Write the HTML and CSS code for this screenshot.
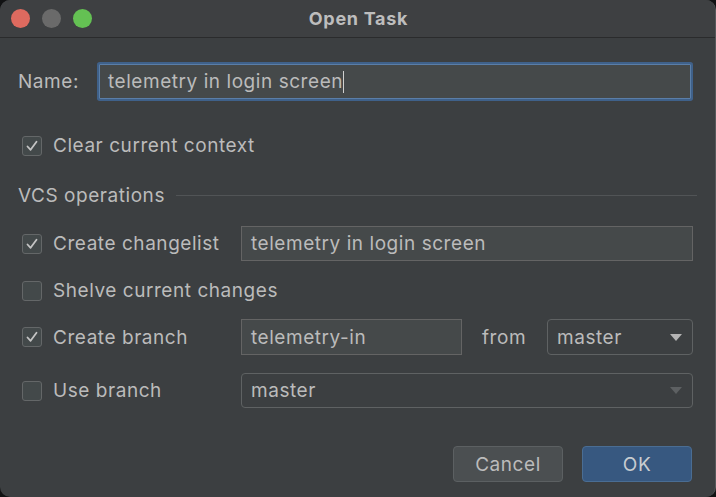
FILE: index.html
```html
<!DOCTYPE html>
<html>
<head>
<meta charset="utf-8">
<link rel="stylesheet" href="styles.css">
</head>
<body>
<div class="window">
  <div class="titlebar">
    <div class="lights">
      <span class="light red"></span>
      <span class="light gray"></span>
      <span class="light green"></span>
    </div>
    <div class="title">Open Task</div>
    <div></div>
  </div>
  <div class="content">
    <div class="row name-row">
      <label class="name-label">Name:</label>
      <div class="field focused">telemetry in login screen<span class="caret"></span></div>
    </div>
    <div class="row clear-row">
      <span class="check checked"><svg viewBox="0 0 20 20" width="20" height="20"><path d="M5.5 10.5 L8.6 13.8 L14.5 5.8" fill="none" stroke="#c4c4c4" stroke-width="1.8" stroke-linecap="round" stroke-linejoin="round"/></svg></span>
      <span class="label">Clear current context</span>
    </div>
    <div class="row section-row">
      <span class="section-title">VCS operations</span>
      <span class="section-line"></span>
    </div>
    <div class="row opt-row changelist-row">
      <div class="opt">
        <span class="check checked"><svg viewBox="0 0 20 20" width="20" height="20"><path d="M5.5 10.5 L8.6 13.8 L14.5 5.8" fill="none" stroke="#c4c4c4" stroke-width="1.8" stroke-linecap="round" stroke-linejoin="round"/></svg></span>
        <span class="label">Create changelist</span>
      </div>
      <div class="field">telemetry in login screen</div>
    </div>
    <div class="row opt-row shelve-row">
      <div class="opt">
        <span class="check"></span>
        <span class="label">Shelve current changes</span>
      </div>
    </div>
    <div class="row opt-row branch-row">
      <div class="opt">
        <span class="check checked"><svg viewBox="0 0 20 20" width="20" height="20"><path d="M5.5 10.5 L8.6 13.8 L14.5 5.8" fill="none" stroke="#c4c4c4" stroke-width="1.8" stroke-linecap="round" stroke-linejoin="round"/></svg></span>
        <span class="label">Create branch</span>
      </div>
      <div class="branch-fields">
        <div class="field branch-name">telemetry-in</div>
        <span class="from">from</span>
        <div class="combo from-combo"><span>master</span><svg class="arrow" viewBox="0 0 12 7" width="12" height="7"><path d="M0 0 H12 L6 7 Z" fill="#b4b4b4"/></svg></div>
      </div>
    </div>
    <div class="row opt-row use-row">
      <div class="opt">
        <span class="check"></span>
        <span class="label">Use branch</span>
      </div>
      <div class="combo disabled"><span>master</span><svg class="arrow" viewBox="0 0 12 7" width="12" height="7"><path d="M0 0 H12 L6 7 Z" fill="#5d6062"/></svg></div>
    </div>
    <div class="buttons">
      <button class="btn cancel">Cancel</button>
      <button class="btn ok">OK</button>
    </div>
  </div>
</div>
</body>
</html>
```
FILE: styles.css
```css
html, body {
  margin: 0;
  padding: 0;
  background: #111213;
}
body {
  width: 716px;
  height: 497px;
  overflow: hidden;
  font-family: "Inter", "Open Sans", "Liberation Sans", sans-serif;
  color: #bbbbbb;
}
.window {
  width: 716px;
  height: 497px;
  background: #3c3f41;
  border-radius: 10px;
  border-right: 1px solid #56595b;
  overflow: hidden;
  box-sizing: border-box;
  display: flex;
  flex-direction: column;
}
.titlebar {
  height: 37px;
  flex: none;
  background: #3e4042;
  border-bottom: 1px solid #2a2b2c;
  display: grid;
  grid-template-columns: 1fr auto 1fr;
  align-items: center;
}
.lights {
  display: flex;
  gap: 12px;
  padding-left: 11px;
}
.light {
  width: 19px;
  height: 19px;
  border-radius: 50%;
  display: block;
}
.red { background: #de6a5f; }
.gray { background: #6a6a6a; }
.green { background: #64c153; }
.title {
  font-weight: 700;
  font-size: 18px;
  color: #bdbdbd;
  letter-spacing: 0.7px;
  padding-left: 2px;
}
.content {
  flex: 1;
  display: flex;
  flex-direction: column;
  padding: 26px 22px 0 18px;
  font-size: 19px;
  letter-spacing: 0.55px;
}
.row {
  display: flex;
  align-items: center;
  white-space: nowrap;
}
.name-row {
  height: 35px;
}
.name-label {
  width: 81px;
}
.field {
  height: 35px;
  box-sizing: border-box;
  background: #45494a;
  border: 1px solid #646464;
  padding: 0 9px;
  display: flex;
  align-items: center;
  color: #bbbbbb;
  flex: 1;
}
.field.focused {
  border-color: #5a7ea8;
  box-shadow: 0 0 0 2px #3f618a;
  border-radius: 1px;
  margin: 0 2px 0 0;
  padding: 0 8px;
}
.caret {
  display: inline-block;
  width: 1px;
  height: 22px;
  background: #d0d0d0;
  margin-left: 0;
}
.check {
  width: 20px;
  height: 20px;
  box-sizing: border-box;
  border: 1px solid #646768;
  border-radius: 3px;
  background: #43494a;
  display: inline-flex;
  align-items: center;
  justify-content: center;
  margin-left: 4px;
  margin-right: 11px;
  flex: none;
}
.check svg {
  display: block;
  margin: -1px;
}
.clear-row {
  margin-top: 29px;
  height: 35px;
}
.section-row {
  margin-top: 22px;
  height: 20px;
}
.section-line {
  flex: 1;
  height: 1px;
  background: #515456;
  margin-left: 11px;
  margin-right: -4px;
}
.opt {
  width: 223px;
  display: flex;
  align-items: center;
  flex: none;
}
.opt-row {
  height: 35px;
}
.changelist-row { margin-top: 21px; }
.shelve-row { margin-top: 12px; }
.branch-row { margin-top: 11px; height: 36px; }
.branch-row .field { height: 36px; }
.use-row { margin-top: 18px; }
.branch-fields {
  flex: 1;
  display: flex;
  align-items: center;
}
.branch-name {
  flex: none;
  width: 221px;
}
.from {
  margin-left: 20px;
  width: 65px;
}
.combo {
  height: 36px;
  box-sizing: border-box;
  border: 1px solid #5f6263;
  border-radius: 4px;
  background: #3c3f41;
  display: flex;
  align-items: center;
  justify-content: space-between;
  padding: 0 10px 0 9px;
  flex: 1;
}
.from-combo {
  flex: none;
  width: 146px;
}
.combo.disabled {
  height: 35px;
}
.buttons {
  margin-top: 38px;
  display: flex;
  justify-content: flex-end;
  gap: 19px;
  padding-right: 1px;
}
.btn {
  width: 110px;
  height: 36px;
  border-radius: 4px;
  font-family: inherit;
  font-size: 19px;
  letter-spacing: 0.55px;
  color: #bbbbbb;
  box-sizing: border-box;
}
.cancel {
  background: #4b4f51;
  border: 1px solid #5c6062;
}
.ok {
  background: #375880;
  border: 1px solid #4a6d93;
  color: #c8ccd0;
}
```
